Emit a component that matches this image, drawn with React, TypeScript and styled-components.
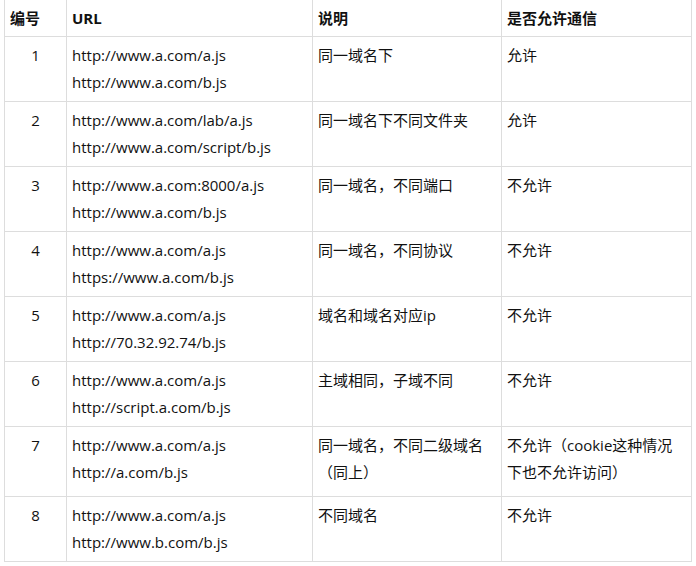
import styled, { createGlobalStyle } from 'styled-components'

const GlobalStyle = createGlobalStyle`
	html, body {
		margin: 0;
		padding: 0;
		background: #fff;
	}
	body {
		font-family: 'Open Sans', 'Noto Sans CJK SC', sans-serif;
		font-size: 15px;
		color: #111;
	}
`

const Page = styled.div`
	padding: 0 5px 0 4px;
	margin-top: -1px;
`

const Table = styled.table`
	width: 687px;
	border-collapse: collapse;
	table-layout: fixed;
`

const HeadCell = styled.th`
	border: 1px solid #dddddd;
	padding: 5px 5px;
	line-height: 26px;
	font-weight: 700;
	text-align: left;
	vertical-align: top;
`

const Cell = styled.td<{ $center?: boolean; $tall?: boolean }>`
	border: 1px solid #dddddd;
	padding: 5px 5px ${({ $tall }) => ($tall ? '10px' : '5px')};
	line-height: 27px;
	text-align: ${({ $center }) => ($center ? 'center' : 'left')};
	vertical-align: top;
`

type Row = {
	id: number
	urls: [string, string]
	desc: string
	allow: string
	tall?: boolean
}

const rows: Row[] = [
	{ id: 1, urls: ['http://www.a.com/a.js', 'http://www.a.com/b.js'], desc: '同一域名下', allow: '允许' },
	{ id: 2, urls: ['http://www.a.com/lab/a.js', 'http://www.a.com/script/b.js'], desc: '同一域名下不同文件夹', allow: '允许' },
	{ id: 3, urls: ['http://www.a.com:8000/a.js', 'http://www.a.com/b.js'], desc: '同一域名，不同端口', allow: '不允许' },
	{ id: 4, urls: ['http://www.a.com/a.js', 'https://www.a.com/b.js'], desc: '同一域名，不同协议', allow: '不允许' },
	{ id: 5, urls: ['http://www.a.com/a.js', 'http://70.32.92.74/b.js'], desc: '域名和域名对应ip', allow: '不允许' },
	{ id: 6, urls: ['http://www.a.com/a.js', 'http://script.a.com/b.js'], desc: '主域相同，子域不同', allow: '不允许' },
	{
		id: 7,
		urls: ['http://www.a.com/a.js', 'http://a.com/b.js'],
		desc: '同一域名，不同二级域名（同上）',
		allow: '不允许（cookie这种情况下也不允许访问）',
		tall: true,
	},
	{ id: 8, urls: ['http://www.a.com/a.js', 'http://www.b.com/b.js'], desc: '不同域名', allow: '不允许' },
]

const App = () => {
	return (
		<>
			<GlobalStyle />
			<Page>
				<Table>
					<colgroup>
						<col style={{ width: 62 }} />
						<col style={{ width: 246 }} />
						<col style={{ width: 189 }} />
						<col style={{ width: 190 }} />
					</colgroup>
					<thead>
						<tr>
							<HeadCell>编号</HeadCell>
							<HeadCell>URL</HeadCell>
							<HeadCell>说明</HeadCell>
							<HeadCell>是否允许通信</HeadCell>
						</tr>
					</thead>
					<tbody>
						{rows.map((row) => (
							<tr key={row.id}>
								<Cell $center $tall={row.tall}>
									{row.id}
								</Cell>
								<Cell $tall={row.tall}>
									{row.urls[0]}
									<br />
									{row.urls[1]}
								</Cell>
								<Cell $tall={row.tall}>{row.desc}</Cell>
								<Cell $tall={row.tall}>{row.allow}</Cell>
							</tr>
						))}
					</tbody>
				</Table>
			</Page>
		</>
	)
}

export default App
